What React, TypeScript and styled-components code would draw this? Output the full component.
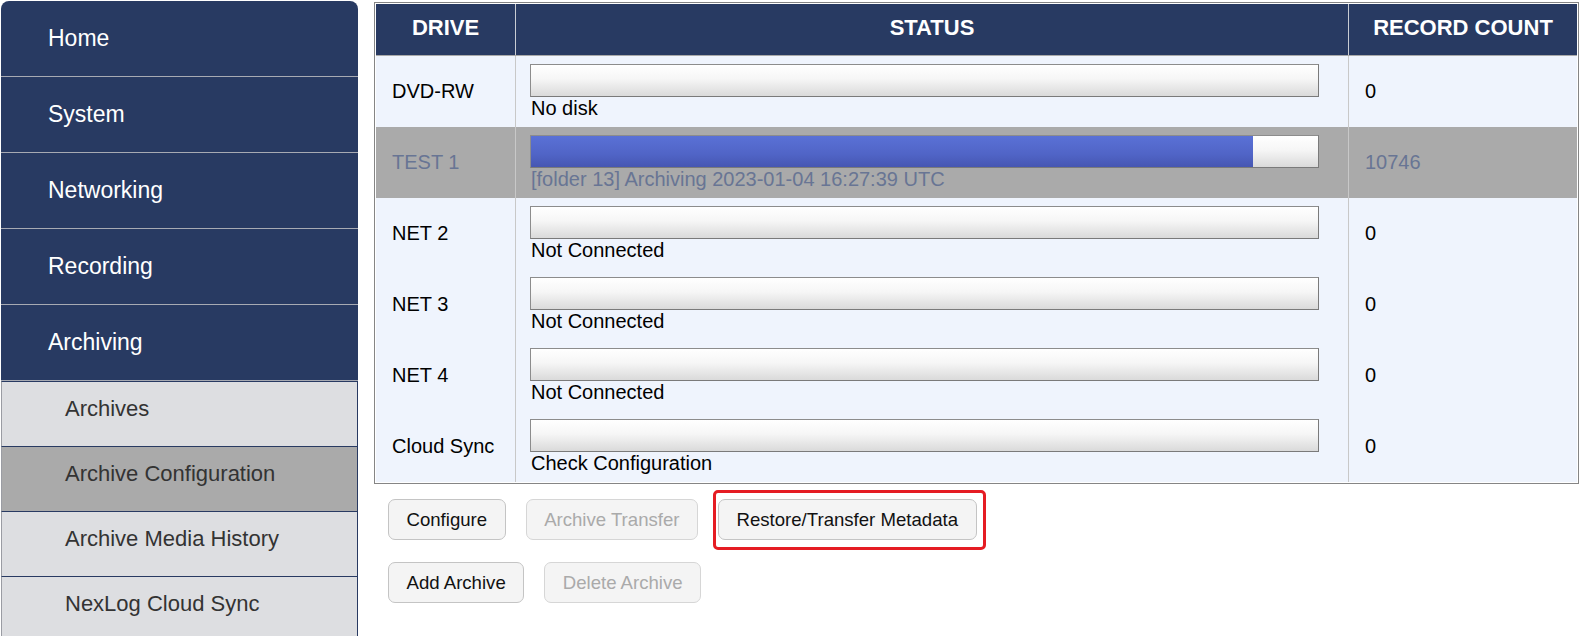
import React from "react";
import styled, { createGlobalStyle, css } from "styled-components";

const GlobalStyle = createGlobalStyle`
  html, body {
    margin: 0;
    padding: 0;
    background: #ffffff;
    font-family: "Liberation Sans", Arial, sans-serif;
  }
  * { box-sizing: border-box; }
`;

const NAVY = "#283a62";

const Page = styled.div`
  display: flex;
  align-items: flex-start;
  gap: 16px;
  padding: 1px 3px 0 1px;
  height: 636px;
  overflow: hidden;
`;

const Sidebar = styled.nav`
  width: 357px;
  flex: none;
  display: flex;
  flex-direction: column;
  border-radius: 8px 8px 0 0;
  overflow: hidden;
`;

const NavItem = styled.div`
  height: 76px;
  display: flex;
  align-items: center;
  padding: 0 0 1px 47px;
  background: ${NAVY};
  color: #ffffff;
  font-size: 23px;
  border-bottom: 1px solid #a7aab3;
`;

const SubItem = styled.div<{ $active?: boolean }>`
  height: 65px;
  display: flex;
  align-items: center;
  padding: 0 0 10px 63px;
  background: ${(p) => (p.$active ? "#aaaaaa" : "#dddee1")};
  color: #333333;
  font-size: 22px;
  border-top: 1px solid ${NAVY};
  border-right: 1px solid ${NAVY};
  border-left: 1px solid #9a9ca3;
`;

const Main = styled.main`
  flex: 1;
  min-width: 0;
  display: flex;
  flex-direction: column;
  padding-top: 1px;
`;

const TableBox = styled.div`
  border: 1px solid #858585;
  padding: 1px;
  background: #ffffff;
`;

const Row = styled.div<{ $selected?: boolean; $header?: boolean }>`
  display: grid;
  grid-template-columns: 139px 1fr 229px;
  height: ${(p) => (p.$header ? "52px" : "71px")};
  background: ${(p) =>
    p.$header ? NAVY : p.$selected ? "#aaaaaa" : "#eff4fd"};
  color: ${(p) => (p.$selected ? "#687594" : "#000000")};
  ${(p) =>
    p.$header &&
    css`
      border-bottom: 1px solid #a9a9a9;
    `}
`;

const HeadCell = styled.div<{ $first?: boolean }>`
  display: flex;
  align-items: center;
  justify-content: center;
  padding-bottom: 4px;
  color: #ffffff;
  font-weight: bold;
  font-size: 22px;
  border-left: ${(p) => (p.$first ? "none" : "1px solid #c9ccd3")};
`;

const Cell = styled.div<{ $first?: boolean }>`
  display: flex;
  align-items: center;
  padding-left: 16px;
  font-size: 20px;
  border-left: ${(p) => (p.$first ? "none" : "1px solid #c8c8c8")};
`;

const StatusCell = styled.div`
  display: flex;
  flex-direction: column;
  justify-content: center;
  padding: 0 29px 0 14px;
  font-size: 20px;
  border-left: 1px solid #c8c8c8;
`;

const Bar = styled.div`
  height: 33px;
  border: 1px solid #8c8c8c;
  border-right-color: #7a7a7a;
  border-bottom-color: #7a7a7a;
  background: linear-gradient(#ffffff 0%, #f6f6f6 45%, #dadada 100%);
  display: flex;
`;

const Fill = styled.div`
  height: 100%;
  background: linear-gradient(#5a71d6 0%, #5064c6 60%, #4656b2 100%);
`;

const StatusText = styled.div`
  padding-left: 1px;
  line-height: 23px;
`;

const ButtonRow = styled.div<{ $gapTop: number }>`
  display: flex;
  gap: 20px;
  padding-left: 14px;
  margin-top: ${(p) => p.$gapTop}px;
`;

const Button = styled.button`
  height: 41px;
  padding: 0 17.5px;
  font-family: "Liberation Sans", Arial, sans-serif;
  font-size: 18.6px;
  color: #111111;
  background: #f4f4f4;
  border: 1px solid #c4c4c4;
  border-radius: 7px;
  cursor: pointer;
  &:disabled {
    color: #aaaaaa;
    border-color: #d6d6d6;
    cursor: default;
  }
`;

const Highlight = styled.span`
  position: relative;
  display: inline-flex;
  &::after {
    content: "";
    position: absolute;
    left: -5px;
    top: -9px;
    right: -9px;
    bottom: -10px;
    border: 3.5px solid #e51c23;
    border-radius: 5px;
    pointer-events: none;
  }
`;

type Drive = { name: string; status: string; count: string; progress?: number; selected?: boolean };

const drives: Drive[] = [
  { name: "DVD-RW", status: "No disk", count: "0" },
  {
    name: "TEST 1",
    status: "[folder 13] Archiving 2023-01-04 16:27:39 UTC",
    count: "10746",
    progress: 91.7,
    selected: true,
  },
  { name: "NET 2", status: "Not Connected", count: "0" },
  { name: "NET 3", status: "Not Connected", count: "0" },
  { name: "NET 4", status: "Not Connected", count: "0" },
  { name: "Cloud Sync", status: "Check Configuration", count: "0" },
];

export default function App() {
  return (
    <>
      <GlobalStyle />
      <Page>
        <Sidebar>
          <NavItem>Home</NavItem>
          <NavItem>System</NavItem>
          <NavItem>Networking</NavItem>
          <NavItem>Recording</NavItem>
          <NavItem>Archiving</NavItem>
          <SubItem>Archives</SubItem>
          <SubItem $active>Archive Configuration</SubItem>
          <SubItem>Archive Media History</SubItem>
          <SubItem>NexLog Cloud Sync</SubItem>
        </Sidebar>
        <Main>
          <TableBox>
            <Row $header>
              <HeadCell $first>DRIVE</HeadCell>
              <HeadCell>STATUS</HeadCell>
              <HeadCell>RECORD COUNT</HeadCell>
            </Row>
            {drives.map((d) => (
              <Row key={d.name} $selected={d.selected}>
                <Cell $first>{d.name}</Cell>
                <StatusCell>
                  <Bar>{d.progress ? <Fill style={{ width: `${d.progress}%` }} /> : null}</Bar>
                  <StatusText>{d.status}</StatusText>
                </StatusCell>
                <Cell>{d.count}</Cell>
              </Row>
            ))}
          </TableBox>
          <ButtonRow $gapTop={15}>
            <Button>Configure</Button>
            <Button disabled>Archive Transfer</Button>
            <Highlight>
              <Button>Restore/Transfer Metadata</Button>
            </Highlight>
          </ButtonRow>
          <ButtonRow $gapTop={22}>
            <Button>Add Archive</Button>
            <Button disabled>Delete Archive</Button>
          </ButtonRow>
        </Main>
      </Page>
    </>
  );
}
